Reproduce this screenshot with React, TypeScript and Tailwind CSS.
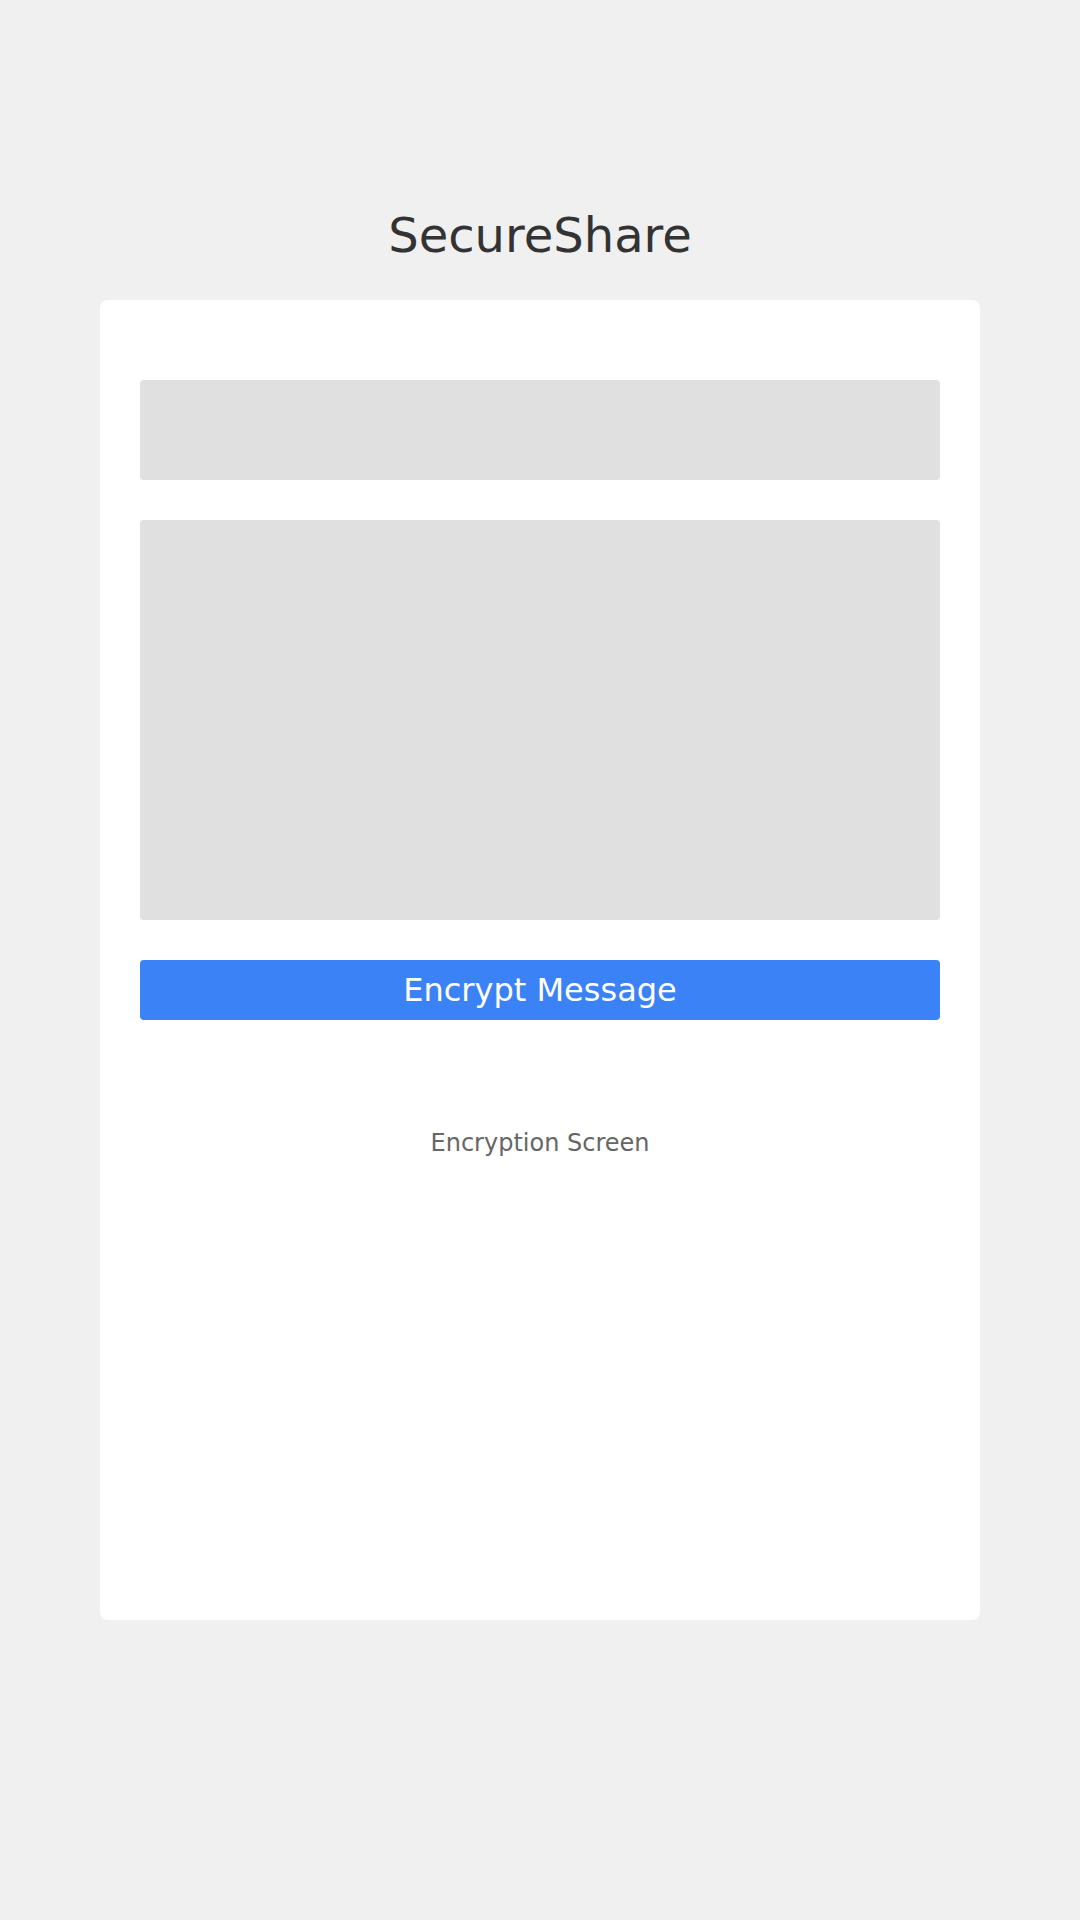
import React from "react";

export default function App() {
  return (
    <div
      className="w-[1080px] h-[1920px] bg-[#f0f0f0] flex flex-col items-center pt-[207px]"
      style={{ fontFamily: '"DejaVu Sans", sans-serif' }}
    >
      <h1 className="text-[48px] leading-[56px] text-[#333333] font-normal m-0">SecureShare</h1>
      <div className="mt-[37px] w-[880px] h-[1320px] bg-white rounded-lg px-10 pt-20 flex flex-col">
        <div className="h-[100px] w-full bg-[#e0e0e0] rounded" />
        <div className="mt-10 h-[400px] w-full bg-[#e0e0e0] rounded" />
        <button className="mt-10 h-[60px] w-full bg-[#3b82f6] rounded text-white text-[32px] leading-[60px] text-center">
          Encrypt Message
        </button>
        <div className="mt-[109px] text-center text-[24px] leading-[28px] text-[#666666]">
          Encryption Screen
        </div>
      </div>
    </div>
  );
}
